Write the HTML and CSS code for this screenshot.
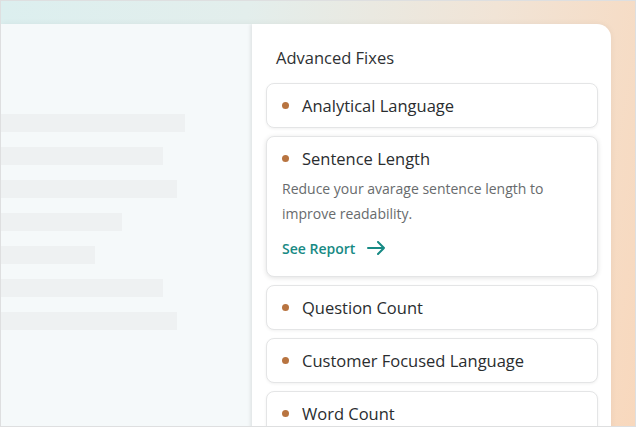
FILE: index.html
```html
<!DOCTYPE html>
<html>
<head>
<meta charset="utf-8">
<link rel="stylesheet" href="styles.css">
</head>
<body>
<div class="frame">
  <div class="window">
    <div class="doc">
      <div class="bar" style="width:184px"></div>
      <div class="bar" style="width:162px"></div>
      <div class="bar" style="width:176px"></div>
      <div class="bar" style="width:121px"></div>
      <div class="bar" style="width:94px"></div>
      <div class="bar" style="width:162px"></div>
      <div class="bar" style="width:176px"></div>
    </div>
    <div class="panel">
      <h2 class="panel-title">Advanced Fixes</h2>
      <div class="card"><span class="dot"></span><span class="card-title">Analytical Language</span></div>
      <div class="card card-open">
        <div class="card-head"><span class="dot"></span><span class="card-title">Sentence Length</span></div>
        <p class="desc">Reduce your avarage sentence length to improve readability.</p>
        <a class="report">See Report
          <svg class="arrow" width="19" height="14" viewBox="0 0 19 14"><path d="M1 7h16M11 1l6 6-6 6" fill="none" stroke="currentColor" stroke-width="2" stroke-linecap="round" stroke-linejoin="round"/></svg>
        </a>
      </div>
      <div class="card"><span class="dot"></span><span class="card-title">Question Count</span></div>
      <div class="card"><span class="dot"></span><span class="card-title">Customer Focused Language</span></div>
      <div class="card"><span class="dot"></span><span class="card-title">Word Count</span></div>
    </div>
  </div>
</div>
</body>
</html>
```
FILE: styles.css
```css
html, body { margin: 0; padding: 0; }
body { font-family: "Open Sans", "Noto Sans", sans-serif; }
.frame {
  width: 636px; height: 427px; box-sizing: border-box;
  border: 1px solid #dedfe0;
  overflow: hidden;
  background: linear-gradient(100deg, #dcefef 0%, #e3eeec 35%, #f1e4d6 70%, #f8d8bd 100%);
  padding-top: 23px;
}
.window {
  display: flex;
  width: 610px; height: 420px;
  border-top-right-radius: 14px;
  overflow: hidden;
  box-shadow: 0 0 6px rgba(0,0,0,0.06);
}
.doc {
  width: 251px; flex: none;
  background: #f5f9fa;
  padding-top: 90px;
  display: flex; flex-direction: column; gap: 15px;
}
.bar { height: 18px; background: #eef1f2; }
.panel {
  flex: 1;
  background: #fff;
  box-shadow: -2px 0 3px rgba(0,0,0,0.08);
  padding: 0 13px 0 14px;
}
.panel-title {
  margin: 0; font-size: 16.5px; font-weight: 500; color: #2e3133;
  padding: 23px 0 0 10px; line-height: 22px; height: 36px;
}
.card {
  display: flex; align-items: center;
  height: 43px;
  border: 1px solid #e4e5e6; border-radius: 8px;
  box-shadow: 0 1px 3px rgba(0,0,0,0.06);
  margin-bottom: 8px;
  padding-left: 15px;
  background: #fff;
}
.card-open { display: block; height: auto; padding: 8px 15px 16px 15px; box-shadow: 0 1px 5px rgba(0,0,0,0.12); }
.card-head { display: flex; align-items: center; height: 26px; }
.dot { width: 7px; height: 7px; border-radius: 50%; background: #b87440; margin-right: 13px; flex: none; }
.card-title { font-size: 16.5px; color: #2a2d2f; }
.desc { margin: 5px 0 0 0; font-size: 14px; line-height: 25px; color: #686b6d; width: 290px; }
.report { display: flex; align-items: center; margin-top: 10px; font-size: 14px; font-weight: 600; color: #178a84; height: 24px; }
.arrow { margin-left: 12px; }
```
